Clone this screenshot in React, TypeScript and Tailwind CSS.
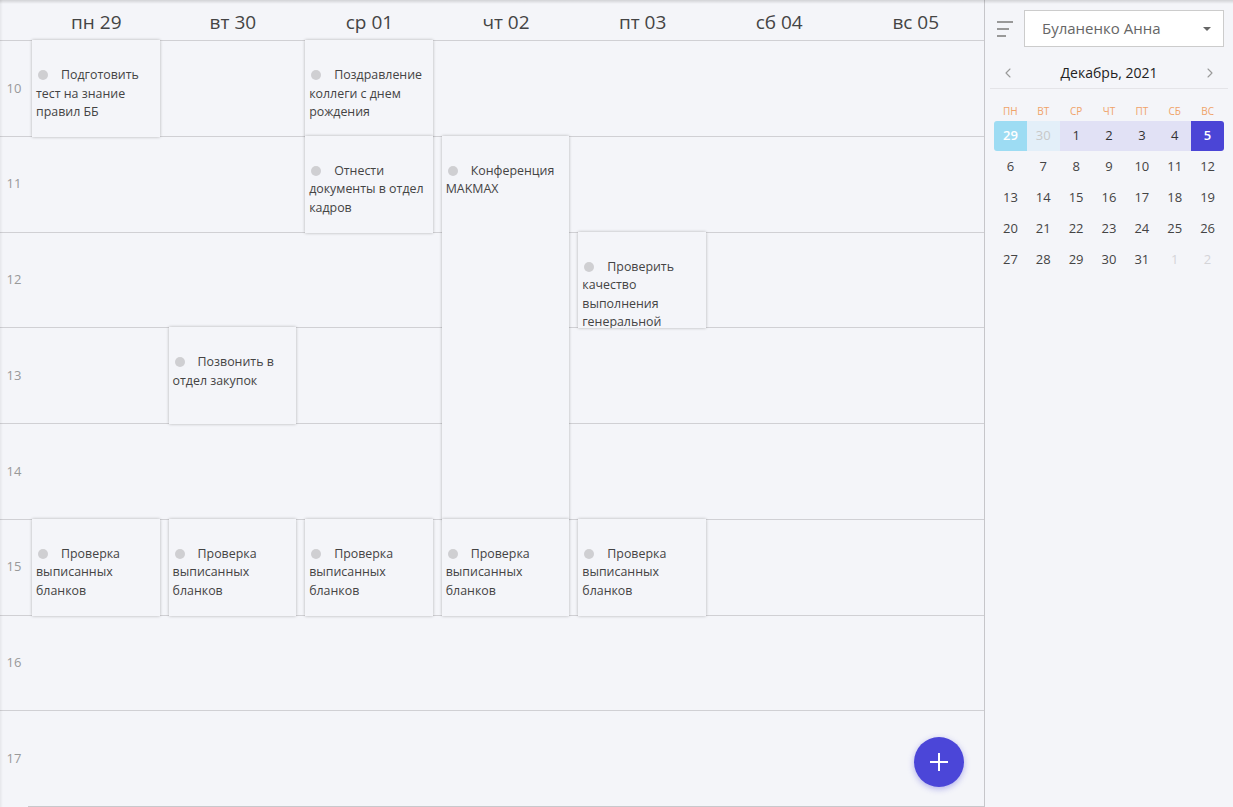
import React from "react";
import { ChevronLeft, ChevronRight } from "lucide-react";

const days = ["пн 29", "вт 30", "ср 01", "чт 02", "пт 03", "сб 04", "вс 05"];
const hours = [10, 11, 12, 13, 14, 15, 16, 17];

type Ev = { col: number; row: number; span: number; text: string };
const events: Ev[] = [
  { col: 0, row: 0, span: 1, text: "Подготовить тест на знание правил ББ" },
  { col: 2, row: 0, span: 1, text: "Поздравление коллеги с днем рождения" },
  { col: 2, row: 1, span: 1, text: "Отнести документы в отдел кадров" },
  { col: 3, row: 1, span: 4, text: "Конференция MAKMAX" },
  { col: 4, row: 2, span: 1, text: "Проверить качество выполнения генеральной уборки" },
  { col: 1, row: 3, span: 1, text: "Позвонить в отдел закупок" },
  { col: 0, row: 5, span: 1, text: "Проверка выписанных бланков" },
  { col: 1, row: 5, span: 1, text: "Проверка выписанных бланков" },
  { col: 2, row: 5, span: 1, text: "Проверка выписанных бланков" },
  { col: 3, row: 5, span: 1, text: "Проверка выписанных бланков" },
  { col: 4, row: 5, span: 1, text: "Проверка выписанных бланков" },
];

const colStart = ["col-start-2", "col-start-3", "col-start-4", "col-start-5", "col-start-6", "col-start-7", "col-start-8"];
const rowStart = ["row-start-1", "row-start-2", "row-start-3", "row-start-4", "row-start-5", "row-start-6", "row-start-7", "row-start-8"];
const rowSpan = ["", "row-span-1", "row-span-2", "row-span-3", "row-span-4"];

const weekdays = ["ПН", "ВТ", "СР", "ЧТ", "ПТ", "СБ", "ВС"];
const weeks = [
  ["6", "7", "8", "9", "10", "11", "12"],
  ["13", "14", "15", "16", "17", "18", "19"],
  ["20", "21", "22", "23", "24", "25", "26"],
  ["27", "28", "29", "30", "31", "1", "2"],
];

export default function App() {
  return (
    <div className="relative w-[1233px] h-[807px] flex bg-[#f4f5f9] overflow-hidden font-['Open_Sans',sans-serif] text-[#444]">
      {/* main calendar */}
      <div className="relative w-[985px] h-full border-r border-[#c6c6ca] flex flex-col">
        {/* header */}
        <div className="flex h-[41px] border-b border-[#d0d0d4] shrink-0">
          <div className="w-[28px] shrink-0" />
          {days.map((d) => (
            <div key={d} className="flex-1 flex items-center justify-center pt-[4px] text-[19px] text-[#444]">
              {d}
            </div>
          ))}
        </div>
        {/* body grid */}
        <div className="grid grid-cols-[28px_repeat(7,1fr)] grid-rows-[repeat(8,95.75px)]">
          {hours.map((h, i) => (
            <div
              key={h}
              className={`col-start-1 col-span-8 ${rowStart[i]} border-b ${i === 7 ? "border-[#c8c8cc] ml-[28px]" : "border-[#d0d0d4]"} flex items-center`}
            >
              <span className={`w-[28px] text-center text-[13px] text-[#999] ${i === 7 ? "-ml-[28px]" : ""}`}>{h}</span>
            </div>
          ))}
          {events.map((e, i) => (
            <div
              key={i}
              className={`${colStart[e.col]} ${rowStart[e.row]} ${rowSpan[e.span]} ml-[4px] mr-[5px] -mt-px bg-[#f4f5f9] shadow-[0_0_3px_rgba(0,0,0,0.28)] overflow-hidden pt-[26px] pl-[4px] pr-[4px] text-[12.4px] leading-[18.5px] text-[#444] z-10`}
            >
              <span className="inline-block w-[10px] h-[10px] rounded-full bg-[#cfcfd2] ml-[2px] mr-[13px] align-[-1px]" />
              {e.text}
            </div>
          ))}
        </div>
        {/* FAB */}
        <button className="absolute right-[20px] bottom-[20px] w-[50px] h-[50px] rounded-full bg-[#4b46d8] shadow-[0_2px_6px_rgba(75,70,216,0.4)] flex items-center justify-center z-20">
          <svg width="22" height="22" viewBox="0 0 22 22">
            <path d="M11 2v18M2 11h18" stroke="white" strokeWidth="2" />
          </svg>
        </button>
      </div>

      {/* right panel */}
      <div className="w-[248px] h-full flex flex-col">
        <div className="flex items-center pl-[12px] pr-[9px] pt-[10px]">
          <div className="w-[16px] flex flex-col gap-[5px] mr-[11px]">
            <div className="h-[2px] w-[16px] bg-[#999]" />
            <div className="h-[2px] w-[12px] bg-[#999]" />
            <div className="h-[2px] w-[9px] bg-[#999]" />
          </div>
          <div className="flex-1 h-[37px] bg-white border border-[#ccc] flex items-center pl-[17px] pr-[12px]">
            <span className="flex-1 text-[15px] text-[#666]">Буланенко Анна</span>
            <span className="w-0 h-0 border-l-[4px] border-r-[4px] border-t-[4px] border-l-transparent border-r-transparent border-t-[#666]" />
          </div>
        </div>
        <div className="mx-[5px] mt-[10px] h-[32px] flex items-center justify-between border-b border-[#e4e4e8] px-[10px]">
          <ChevronLeft size={16} color="#999" strokeWidth={1.6} />
          <span className="text-[14px] text-[#222]">Декабрь, 2021</span>
          <ChevronRight size={16} color="#999" strokeWidth={1.6} />
        </div>
        <div className="mx-[9px] mt-[12px]">
          <div className="grid grid-cols-7 h-[20px] items-center">
            {weekdays.map((w) => (
              <span key={w} className="text-center text-[10px] text-[#f0a36a]">{w}</span>
            ))}
          </div>
          <div className="grid grid-cols-7 h-[30px] items-center text-[13px]">
            <span className="h-full flex items-center justify-center bg-[#9ddcf3] text-white font-semibold rounded-l-[3px]">29</span>
            <span className="h-full flex items-center justify-center bg-[#e3eff9] text-[#c8c8c8]">30</span>
            <span className="h-full flex items-center justify-center bg-[#e1e1f5] text-[#333]">1</span>
            <span className="h-full flex items-center justify-center bg-[#e1e1f5] text-[#333]">2</span>
            <span className="h-full flex items-center justify-center bg-[#e1e1f5] text-[#333]">3</span>
            <span className="h-full flex items-center justify-center bg-[#e1e1f5] text-[#333]">4</span>
            <span className="h-full flex items-center justify-center bg-[#4b45d6] text-white font-semibold rounded-r-[3px]">5</span>
          </div>
          {weeks.map((w, wi) => (
            <div key={wi} className="grid grid-cols-7 h-[31px] items-center text-[13px]">
              {w.map((d, di) => (
                <span
                  key={di}
                  className={`text-center ${wi === 3 && di >= 5 ? "text-[#d4d4d8]" : "text-[#444]"}`}
                >
                  {d}
                </span>
              ))}
            </div>
          ))}
        </div>
      </div>

      {/* top shadow */}
      <div className="absolute top-0 left-0 right-0 h-[4px] bg-gradient-to-b from-[rgba(0,0,0,0.14)] to-transparent z-30 pointer-events-none" />
      <div className="absolute top-0 left-0 bottom-0 w-[3px] bg-gradient-to-r from-[rgba(0,0,0,0.06)] to-transparent z-30 pointer-events-none" />
    </div>
  );
}
